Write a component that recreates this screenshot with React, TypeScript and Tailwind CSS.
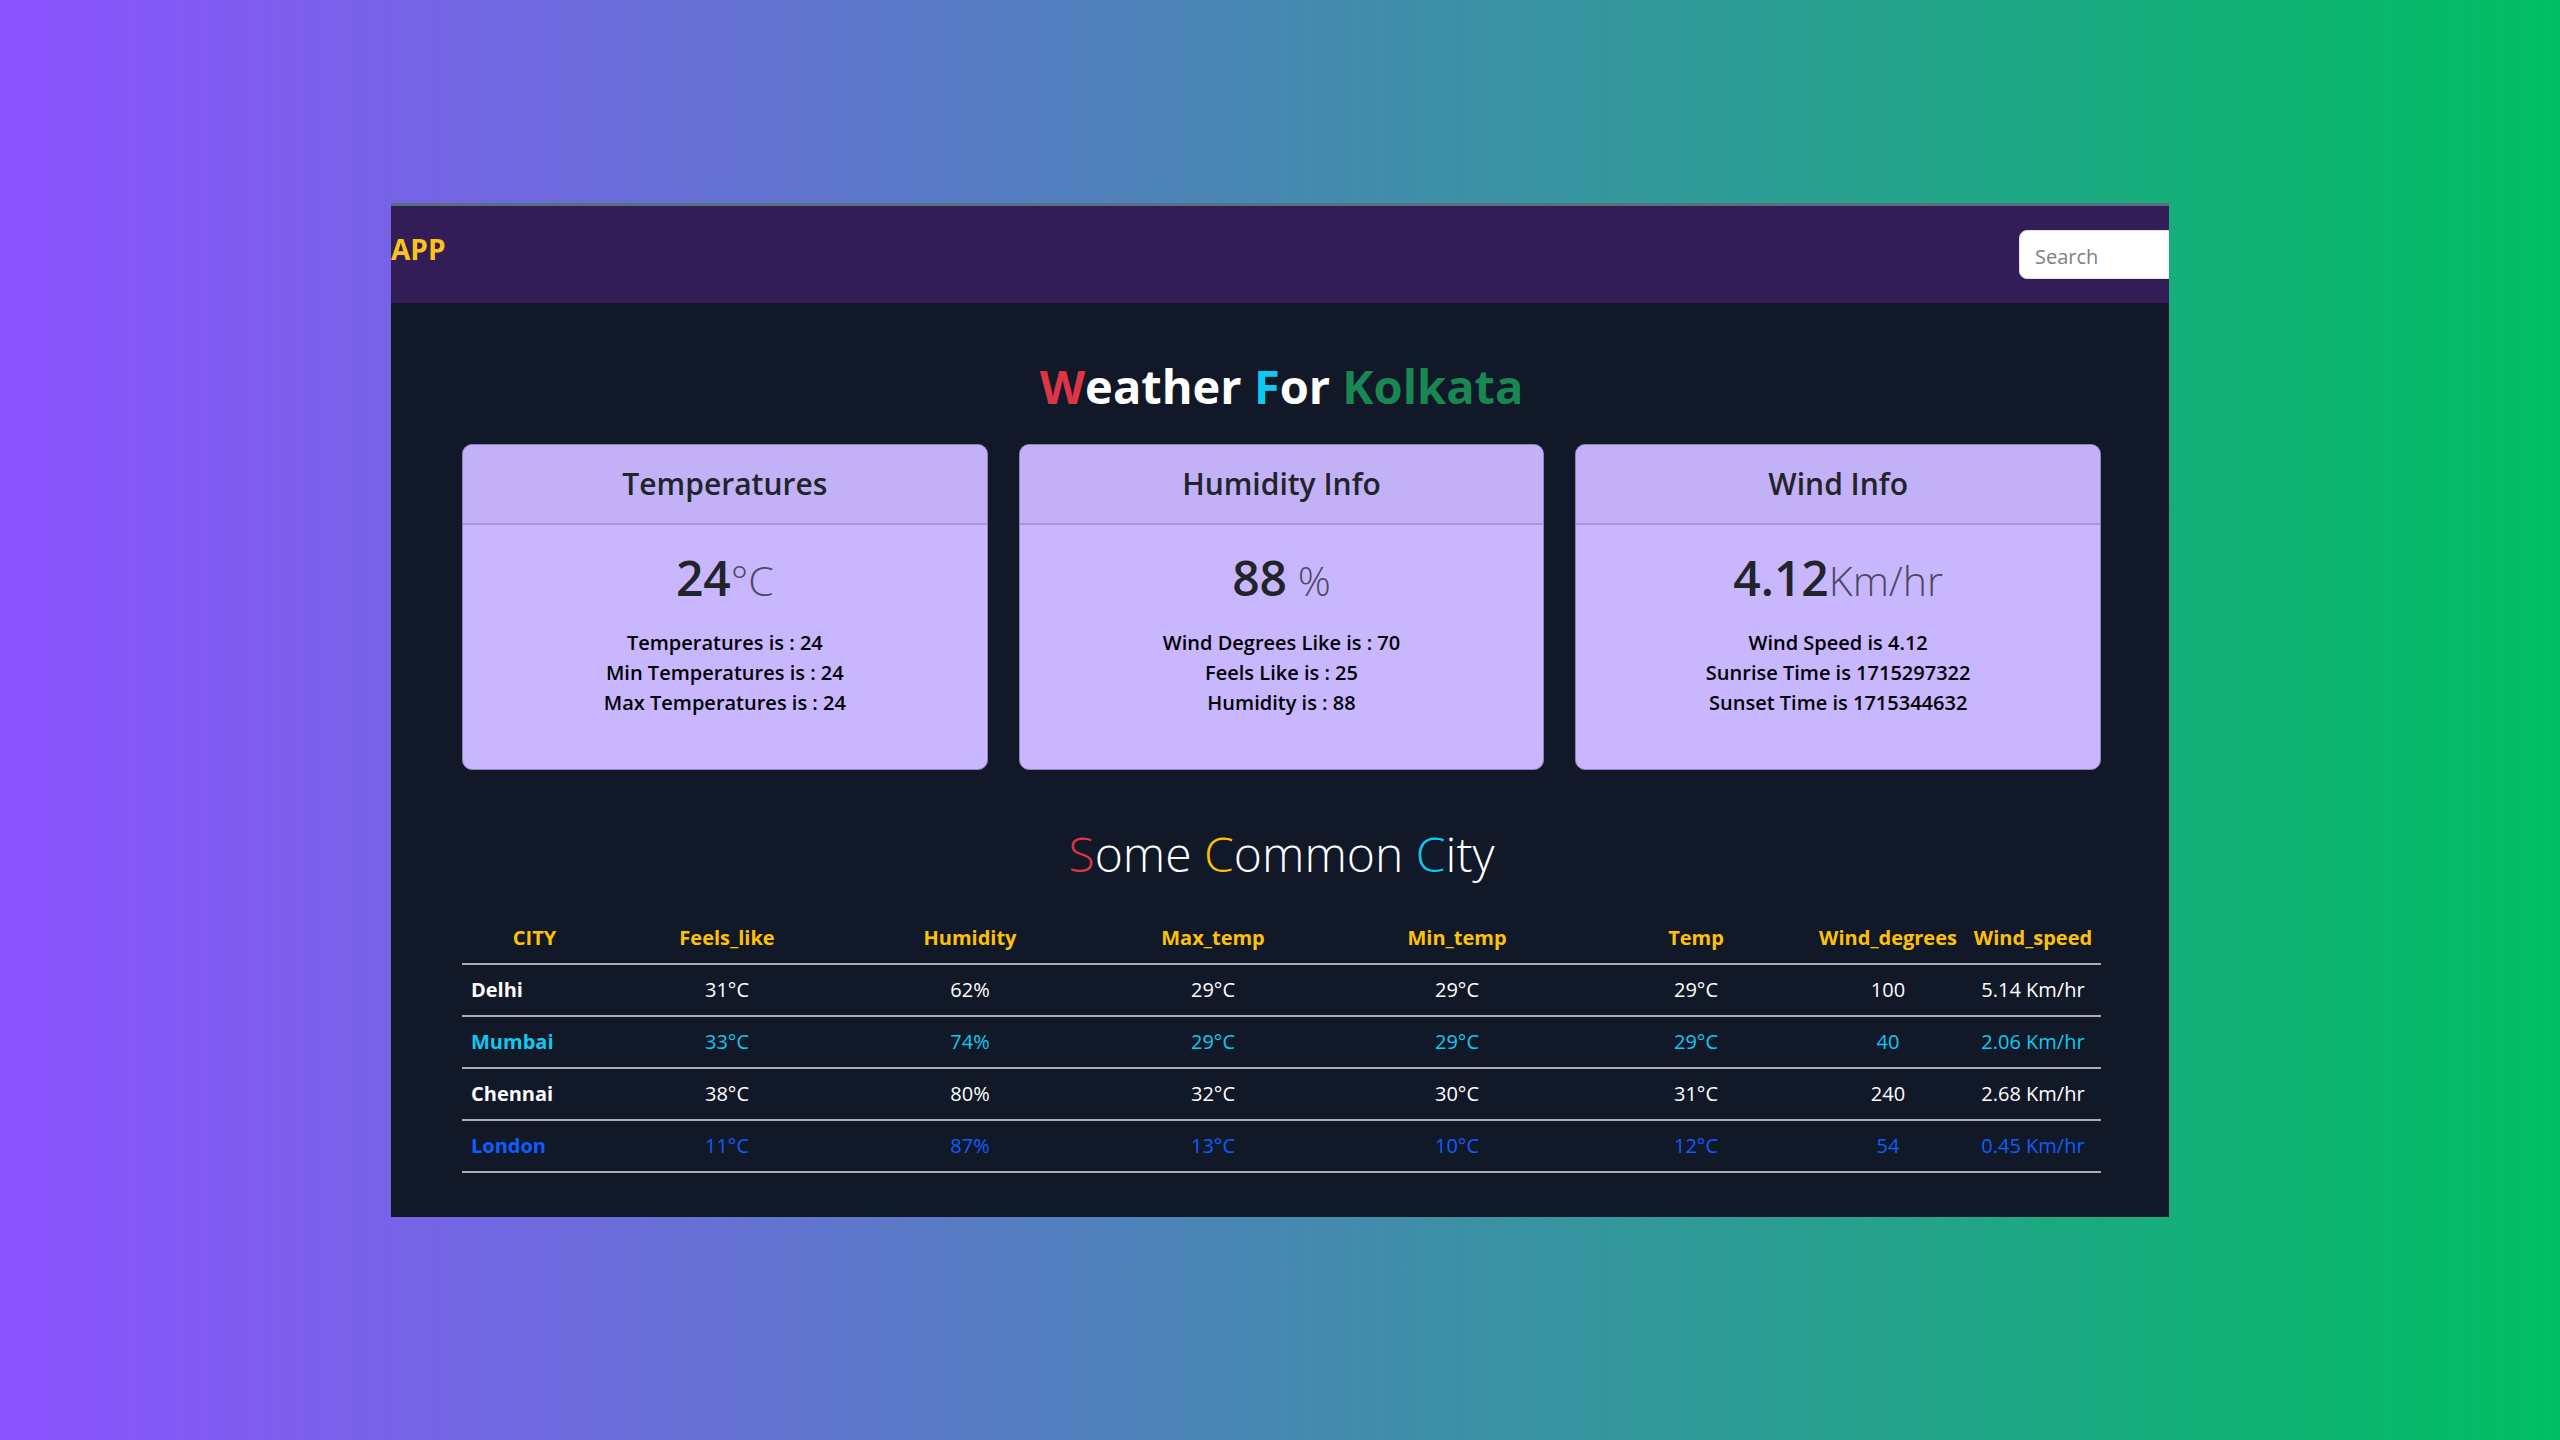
import React from "react";

type Card = {
  title: string;
  value: string;
  unit: string;
  lines: string[];
};

const cards: Card[] = [
  {
    title: "Temperatures",
    value: "24",
    unit: "°C",
    lines: ["Temperatures is : 24", "Min Temperatures is : 24", "Max Temperatures is : 24"],
  },
  {
    title: "Humidity Info",
    value: "88",
    unit: " %",
    lines: ["Wind Degrees Like is : 70", "Feels Like is : 25", "Humidity is : 88"],
  },
  {
    title: "Wind Info",
    value: "4.12",
    unit: "Km/hr",
    lines: ["Wind Speed is 4.12", "Sunrise Time is 1715297322", "Sunset Time is 1715344632"],
  },
];

const columns = [
  { label: "CITY", width: "w-[145px]" },
  { label: "Feels_like", width: "w-[240px]" },
  { label: "Humidity", width: "w-[246px]" },
  { label: "Max_temp", width: "w-[240px]" },
  { label: "Min_temp", width: "w-[248px]" },
  { label: "Temp", width: "w-[230px]" },
  { label: "Wind_degrees", width: "w-[154px]" },
  { label: "Wind_speed", width: "w-[136px]" },
];

const cities = [
  { name: "Delhi", color: "text-white", cells: ["31°C", "62%", "29°C", "29°C", "29°C", "100", "5.14 Km/hr"] },
  { name: "Mumbai", color: "text-[#0dcaf0]", cells: ["33°C", "74%", "29°C", "29°C", "29°C", "40", "2.06 Km/hr"] },
  { name: "Chennai", color: "text-white", cells: ["38°C", "80%", "32°C", "30°C", "31°C", "240", "2.68 Km/hr"] },
  { name: "London", color: "text-[#0d5efd]", cells: ["11°C", "87%", "13°C", "10°C", "12°C", "54", "0.45 Km/hr"] },
];

function Navbar() {
  return (
    <header className="flex h-[100px] items-start justify-between border-t-[3px] border-[#56707c] bg-[#331d56]">
      <a href="#" className="pt-[23px] text-[28px] leading-[40px] font-bold text-[#fcc419]">
        APP
      </a>
      <form className="-mr-[100px] pt-[24px]" onSubmit={(e) => e.preventDefault()}>
        <input
          type="search"
          aria-label="Search"
          placeholder="Search"
          className="h-[49px] w-[250px] rounded-[8px] border border-[#dee2e6] bg-white px-[15px] pt-[3px] text-[20px] text-[#212529] placeholder:text-[#7b7f83]"
        />
      </form>
    </header>
  );
}

function WeatherCard({ card }: { card: Card }) {
  return (
    <section className="overflow-hidden rounded-[10px] border border-[#8f82b8] bg-[#c8b6ff] text-center">
      <h2 className="border-b-2 border-[#a899d4] bg-[#c2b1f7] pt-[19px] pb-[19px] text-[30px] leading-[40px] font-semibold text-[#212529]">
        {card.title}
      </h2>
      <p className="pt-[23px] text-[48px] leading-[60px] font-semibold whitespace-pre text-[#212529]">
        {card.value}
        <small className="text-[41px] font-light text-[#212529]/75">{card.unit}</small>
      </p>
      <ul className="pt-[18px] pb-[51px] text-[20px] leading-[30px] font-semibold text-black">
        {card.lines.map((line) => (
          <li key={line}>{line}</li>
        ))}
      </ul>
    </section>
  );
}

function CityTable() {
  return (
    <table className="w-full table-fixed border-collapse text-center text-[20px] leading-[30px]">
      <colgroup>
        {columns.map((c) => (
          <col key={c.label} className={c.width} />
        ))}
      </colgroup>
      <thead>
        <tr className="h-[52px] border-b-2 border-[#a9adb4] text-[#ffc107]">
          {columns.map((c) => (
            <th key={c.label} scope="col" className="font-bold whitespace-nowrap">
              {c.label}
            </th>
          ))}
        </tr>
      </thead>
      <tbody>
        {cities.map((city) => (
          <tr key={city.name} className={`h-[52px] border-b-2 border-[#a9adb4] ${city.color}`}>
            <th scope="row" className="pl-[9px] text-left font-bold">
              {city.name}
            </th>
            {city.cells.map((cell, i) => (
              <td key={i} className="whitespace-nowrap">
                {cell}
              </td>
            ))}
          </tr>
        ))}
      </tbody>
    </table>
  );
}

export default function App() {
  return (
    <div className="min-h-screen bg-[linear-gradient(90deg,#8c52ff,#00bf63)] px-[391px] py-[203px] font-['Open_Sans','Noto_Sans',sans-serif]">
      <div className="overflow-hidden bg-[#111827]">
        <Navbar />
        <main className="pr-[68px] pb-[44px] pl-[71px]">
          <h1 className="pt-[51px] text-center text-[47px] leading-[64px] font-bold text-white">
            <span className="text-[#dc3545]">W</span>eather <span className="text-[#0dcaf0]">F</span>or{" "}
            <span className="text-[#198754]">Kolkata</span>
          </h1>
          <div className="grid grid-cols-3 gap-[31px] pt-[26px]">
            {cards.map((card) => (
              <WeatherCard key={card.title} card={card} />
            ))}
          </div>
          <h2 className="pt-[52px] pb-[26px] text-center text-[48px] leading-[64px] font-light text-white">
            <span className="text-[#dc3545]">S</span>ome <span className="text-[#ffc107]">C</span>ommon{" "}
            <span className="text-[#0dcaf0]">C</span>ity
          </h2>
          <CityTable />
        </main>
      </div>
    </div>
  );
}
